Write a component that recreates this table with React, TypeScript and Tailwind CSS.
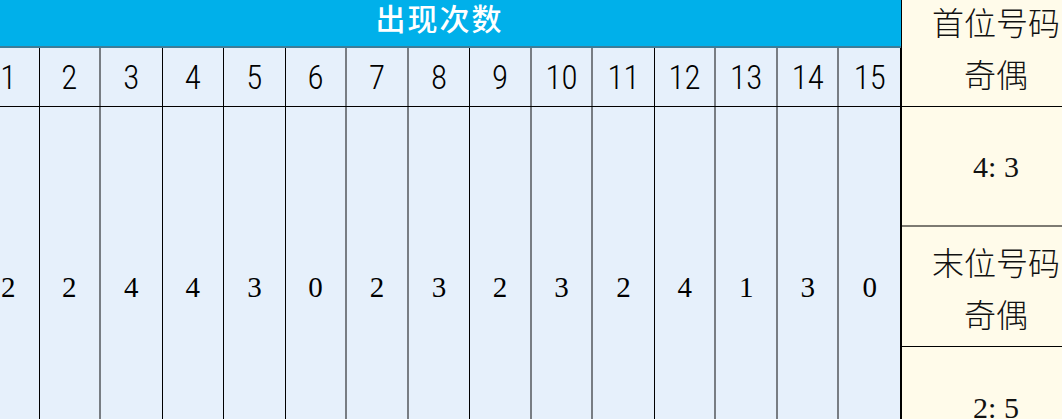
const counts = [2, 2, 4, 4, 3, 0, 2, 3, 2, 3, 2, 4, 1, 3, 0];

// right border of each numbered column, black or gray as in the source sheet
const lineCls = [
  "border-r-black",
  "border-r-[#787d83] border-r-2",
  "border-r-black",
  "border-r-black",
  "border-r-black",
  "border-r-[#787d83] border-r-2",
  "border-r-[#787d83] border-r-2",
  "border-r-black",
  "border-r-[#787d83] border-r-2",
  "border-r-[#787d83] border-r-2",
  "border-r-black",
  "border-r-[#787d83] border-r-2",
  "border-r-[#787d83] border-r-2",
  "border-r-[#787d83] border-r-2",
  "border-r-black",
];

const serif = "font-['Liberation_Serif','Noto_Sans_CJK_SC',serif]";
const kai = "font-['Noto_Sans_CJK_SC',sans-serif] font-light";

export default function App() {
  return (
    <div className="w-[1062px] h-[419px] overflow-hidden bg-white">
      <div className="flex mt-[-13px] ml-[-22px] w-[1112px]">
        {/* 出现次数 block */}
        <div className="flex flex-col w-[923px] shrink-0">
          <div className="h-[61px] bg-[#00b0ea] border-b-2 border-b-[#3e7d98] flex items-center justify-center">
            <span className="text-white text-[30px] tracking-[2px] font-['Noto_Sans_CJK_SC',sans-serif] font-medium leading-none">
              出现次数
            </span>
          </div>
          <div className="grid grid-cols-15 h-[59px] border-b border-b-black bg-[#e6f0fb]">
            {counts.map((_, i) => (
              <div
                key={i}
                className={`flex items-center justify-center border-r ${lineCls[i]} text-black text-[33px] leading-none font-light font-['Liberation_Sans_Narrow','Roboto_Condensed',sans-serif]`}
              >
                {i + 1}
              </div>
            ))}
          </div>
          <div className="grid grid-cols-15 h-[360px] bg-[#e6f0fb]">
            {counts.map((n, i) => (
              <div
                key={i}
                className={`flex items-center justify-center border-r ${lineCls[i]} text-black text-[29px] leading-none ${serif}`}
              >
                {n}
              </div>
            ))}
          </div>
        </div>

        {/* 奇偶 column */}
        <div className="flex flex-col w-[189px] shrink-0 bg-[#fffbea] border-l border-l-black">
          <div className={`h-[120px] flex flex-col items-center justify-center border-b border-b-black text-[32px] leading-[52px] text-[#111] ${kai}`}>
            <span>首位号码</span>
            <span>奇偶</span>
          </div>
          <div className={`h-[120px] flex items-center justify-center border-b-2 border-b-[#7d7a72] text-[30px] text-[#111] ${serif}`}>
            4:&nbsp;3
          </div>
          <div className={`h-[120px] flex flex-col items-center justify-center border-b border-b-black text-[32px] leading-[52px] text-[#111] ${kai}`}>
            <span>末位号码</span>
            <span>奇偶</span>
          </div>
          <div className={`h-[120px] flex items-center justify-center text-[30px] text-[#111] ${serif}`}>
            2:&nbsp;5
          </div>
        </div>
      </div>
    </div>
  );
}
